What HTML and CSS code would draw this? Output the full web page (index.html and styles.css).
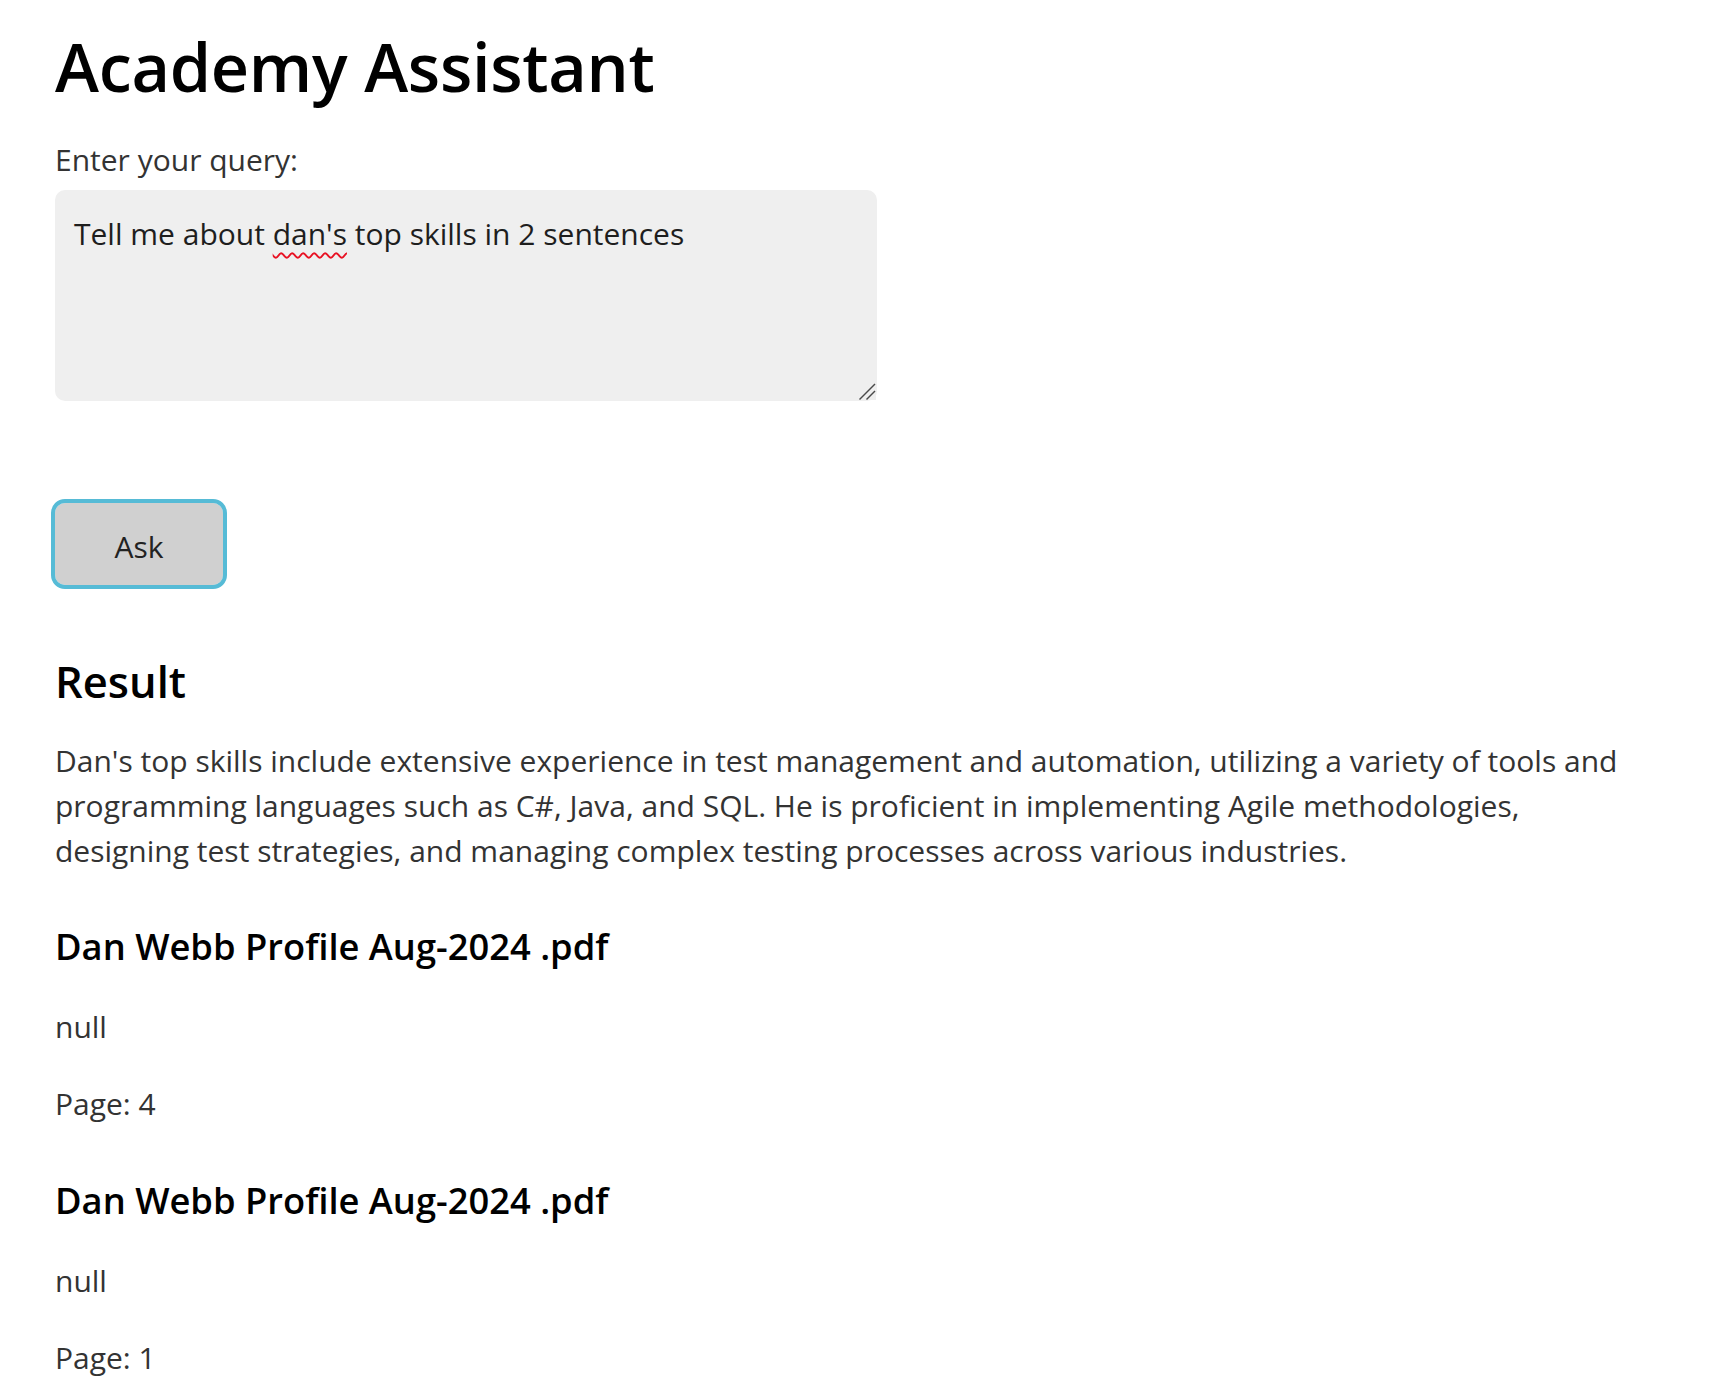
FILE: index.html
```html
<!DOCTYPE html>
<html lang="en">
<head>
<meta charset="utf-8">
<title>Academy Assistant</title>
<link rel="stylesheet" href="styles.css">
</head>
<body>
<main class="app">
  <h1 class="title">Academy Assistant</h1>
  <label class="query-label" for="query">Enter your query:</label>
  <div class="query-field">
    <div class="query" id="query" role="textbox" contenteditable="true" spellcheck="false">Tell me about <span class="misspelled">dan's</span> top skills in 2 sentences</div>
    <svg class="grip" width="18" height="18" viewBox="0 0 18 18" aria-hidden="true">
      <rect x="0" y="0" width="18" height="18" fill="#efefef"/>
      <line x1="1.5" y1="17.5" x2="17" y2="2" stroke="#4a4a4a" stroke-width="1.4"/>
      <line x1="8.5" y1="17.5" x2="17" y2="9" stroke="#4a4a4a" stroke-width="1.4"/>
    </svg>
  </div>
  <button class="ask" type="button">Ask</button>
  <section class="result">
    <h2 class="result-title">Result</h2>
    <p class="answer">Dan's top skills include extensive experience in test management and automation, utilizing a variety of tools and programming languages such as C#, Java, and SQL. He is proficient in implementing Agile methodologies, designing test strategies, and managing complex testing processes across various industries.</p>
    <div class="source">
      <h3 class="source-name">Dan Webb Profile Aug-2024 .pdf</h3>
      <p class="source-text">null</p>
      <p class="source-page">Page: 4</p>
    </div>
    <div class="source">
      <h3 class="source-name">Dan Webb Profile Aug-2024 .pdf</h3>
      <p class="source-text">null</p>
      <p class="source-page">Page: 1</p>
    </div>
  </section>
</main>
</body>
</html>
```
FILE: styles.css
```css
* { box-sizing: border-box; }

html, body {
  margin: 0;
  background: #ffffff;
}

body {
  font-family: "Open Sans", "Noto Sans", "Liberation Sans", sans-serif;
  font-size: 30px;
  color: #333333;
}

.app {
  width: 1690px;
  padding: 26px 55px 0 55px;
}

.title {
  margin: 0;
  font-size: 66.5px;
  line-height: 80px;
  font-weight: 600;
  color: #000;
  letter-spacing: -0.3px;
}

.query-label {
  display: block;
  margin-top: 34px;
  font-size: 30px;
  line-height: 40px;
  color: #333;
}

.query-field {
  position: relative;
  margin-top: 10px;
  width: 822px;
  height: 211px;
}

.query {
  width: 100%;
  height: 100%;
  padding: 24px 19px;
  background: #efefef;
  border-radius: 10px;
  font-size: 30px;
  line-height: 40px;
  color: #1e1e1e;
  overflow: auto;
  outline: none;
}

.grip {
  position: absolute;
  right: 1px;
  bottom: 1px;
  pointer-events: none;
}

.misspelled {
  text-decoration: underline wavy #e81123;
  text-decoration-thickness: 1.5px;
  text-underline-offset: 7px;
}

.ask {
  display: flex;
  align-items: center;
  justify-content: center;
  margin-top: 102px;
  width: 168px;
  height: 82px;
  padding: 5px 0 0 0;
  border: none;
  border-radius: 10px;
  outline: 4px solid #56bbd6;
  background: #d0d0d0;
  font-family: inherit;
  font-size: 30px;
  color: #222;
}

.result-title {
  margin: 69px 0 0 0;
  font-size: 43.5px;
  line-height: 56px;
  font-weight: 600;
  color: #000;
}

.answer {
  margin: 29px 0 0 0;
  line-height: 44.8px;
}

.source-name {
  margin: 49.5px 0 0 0;
  font-size: 36.3px;
  line-height: 46px;
  font-weight: 600;
  color: #000;
}

.source-text {
  margin: 36.5px 0 0 0;
  line-height: 44.8px;
}

.source-page {
  margin: 32px 0 0 0;
  line-height: 44.8px;
}

.source + .source .source-name {
  margin-top: 50px;
}
```
